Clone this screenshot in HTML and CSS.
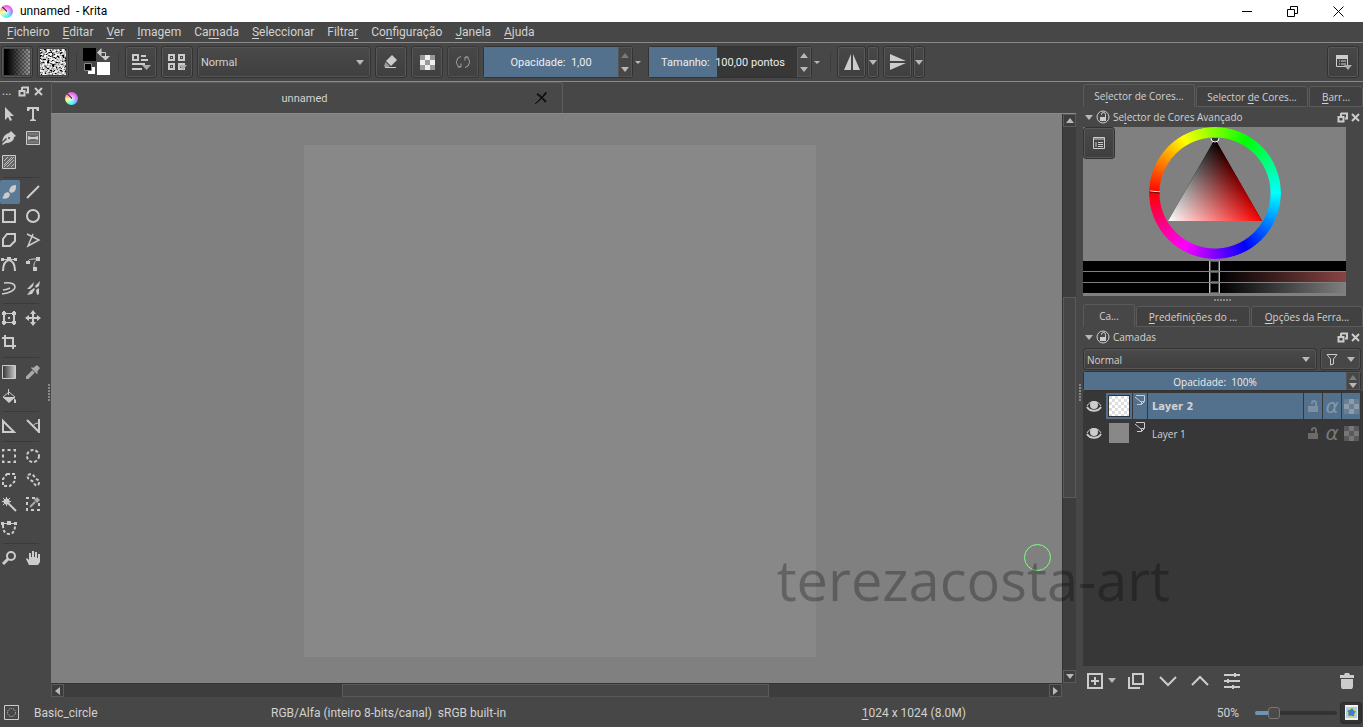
FILE: index.html
```html
<!DOCTYPE html>
<html lang="pt">
<head>
  <meta charset="UTF-8">
  <meta name="viewport" content="width=device-width, initial-scale=1.0">
  <title>unnamed - Krita</title>
  <link rel="stylesheet" href="styles.css">
</head>

<body>
  <header class="titlebar">
    <span class="logo"></span>
    <h1>unnamed&nbsp; - Krita</h1>
    <div class="window-buttons">
      <button type="button" aria-label="Minimizar"><svg width="11" height="11"><path d="M1 5.500h10"/></svg></button>
      <button type="button" aria-label="Restaurar"><svg width="11" height="11"><path d="M.5 3.500h7v7h-7zM3.500 3.500v-3h7v7h-3"/></svg></button>
      <button type="button" aria-label="Fechar"><svg width="11" height="11"><path d="M.5.500l10 10M10.500.500l-10 10"/></svg></button>
    </div>
  </header>

  <nav class="menubar">
    <a href="#"><u>F</u>icheiro</a>
    <a href="#"><u>E</u>ditar</a>
    <a href="#"><u>V</u>er</a>
    <a href="#"><u>I</u>magem</a>
    <a href="#">Ca<u>m</u>ada</a>
    <a href="#"><u>S</u>eleccionar</a>
    <a href="#">Filtra<u>r</u></a>
    <a href="#">Co<u>n</u>figuração</a>
    <a href="#"><u>J</u>anela</a>
    <a href="#"><u>A</u>juda</a>
  </nav>

  <div class="toolbar">
    <button type="button" class="tbtn" aria-label="Gradiente"><span class="gradient-chip"></span></button>
    <button type="button" class="tbtn" aria-label="Padrão">
      <svg width="26" height="26">
        <filter id="grain" x="0" y="0" width="1" height="1">
          <feTurbulence type="fractalNoise" baseFrequency="0.4 0.6" numOctaves="3" seed="4"/>
          <feColorMatrix values="3 0 0 0 -1  3 0 0 0 -1  3 0 0 0 -1  0 0 0 0 1"/>
        </filter>
        <rect width="26" height="26" filter="url(#grain)"/>
      </svg>
    </button>
    <span class="sep"></span>
    <button type="button" class="color-pair" aria-label="Cores">
      <svg width="28" height="28">
        <path d="M0 0h13v13H0z" fill="#000"/>
        <path d="M14 14h13v13H14z" fill="#fff"/>
        <path d="M5 19h7v7H5z" fill="#fff"/>
        <path d="M1.500 15.500h7v7h-7z" fill="#000" stroke="#8a8a8a"/>
        <path d="M17 4.500h5.500v5" class="ln"/>
        <path d="M14 4.500L18.500 0v9zM18 8h9l-4.500 4.500z" class="fl"/>
      </svg>
    </button>
    <span class="sep"></span>
    <button type="button" class="tbtn" aria-label="Editar pincel">
      <svg width="22" height="22">
        <path d="M3 4h5v5H3zM11 5h5M11 9h7M2 13h13M2 18h10" class="ln w2"/>
        <path d="M12 14h9l-4.500 5z" fill="#aaa"/>
      </svg>
    </button>
    <button type="button" class="tbtn" aria-label="Escolher pincel">
      <svg width="22" height="22">
        <path d="M3 4h5v5H3zM13 4h5v5h-5zM3 13h5v5H3zM13 13h5v5h-5z" class="ln w2"/>
        <path d="M5 6h1v1H5zM15 6h1v1h-1zM5 15h1v1H5z" fill="#ccc"/>
        <path d="M13 14h8l-4 5z" fill="#aaa"/>
      </svg>
    </button>
    <label class="select blend">
      <select aria-label="Modo de mistura"><option>Normal</option></select>
    </label>
    <button type="button" class="tbtn" aria-label="Borracha">
      <svg width="16" height="16">
        <path d="M9 1l5 5-6 6-5-5z" class="fl"/>
        <path d="M2.500 8l4 4-1 1.500H2.500L1 12z" fill="#9a9a9a"/>
        <path d="M2 13.500h11" class="ln"/>
      </svg>
    </button>
    <button type="button" class="tbtn" aria-label="Preservar alfa"><span class="checker"></span></button>
    <button type="button" class="tbtn dim" aria-label="Recarregar">
      <svg width="16" height="16"><path d="M6 2.500A5.500 5.500 0 0 0 5 13M10 13.500A5.500 5.500 0 0 0 11 3M2.500 13H6v-3.500M13.500 3H10v3.500" class="ln"/></svg>
    </button>
    <div class="spin opacity">
      <input type="text" value="Opacidade:&nbsp; 1,00" aria-label="Opacidade">
      <span class="arrows"><button type="button" class="up off" aria-label="Mais"></button><button type="button" class="down" aria-label="Menos"></button></span>
    </div>
    <span class="tiny"></span>
    <div class="spin size">
      <input type="text" value="Tamanho:&nbsp; 100,00 pontos" aria-label="Tamanho">
      <span class="arrows"><button type="button" class="up" aria-label="Mais"></button><button type="button" class="down" aria-label="Menos"></button></span>
    </div>
    <span class="tiny"></span>
    <span class="sep"></span>
    <div class="split">
      <button type="button" class="tbtn" aria-label="Espelho horizontal">
        <svg width="18" height="18"><path d="M8 1v16H1zM10 1v16h7z" class="fl"/></svg>
      </button><button type="button" class="tbtn drop" aria-label="Opções"></button>
    </div>
    <div class="split">
      <button type="button" class="tbtn" aria-label="Espelho vertical">
        <svg width="18" height="18"><path d="M1 8h16L1 1zM1 10h16L1 17z" class="fl"/></svg>
      </button><button type="button" class="tbtn drop" aria-label="Opções"></button>
    </div>
    <button type="button" class="tbtn push" aria-label="Área de trabalho">
      <svg width="20" height="18">
        <path d="M3.500 3.500h11v10h-11zM3 4h12M6 8h1M8 8h5M6 11h1M8 11h5" class="ln"/><path d="M3 2h12v4H3z" class="fl"/>
        <path d="M11 12h8l-4 5z" fill="#aaa"/>
      </svg>
    </button>
  </div>

  <main class="workspace">
    <aside class="toolbox">
      <div class="toolbox-head">
        <span>...</span>
        <button type="button" aria-label="Destacar"><svg width="11" height="11"><path d="M4 1.500h6v5H8M4 1v3" class="ln w2"/><path d="M1.500 5h5v4.500h-5z" class="ln w2"/></svg></button>
        <button type="button" aria-label="Fechar"><svg width="9" height="9"><path d="M1 1l7 7M8 1L1 8" class="ln w2"/></svg></button>
      </div>
      <div class="tools">
        <button type="button" aria-label="Seleccionar formas"><svg><path d="M4 1v13l3-3 2 4 2-1-2-4h4z" class="fl"/></svg></button>
        <button type="button" aria-label="Texto"><svg><path d="M2 1h12v4h-2l-1-2H9v10l2 1v1H5v-1l2-1V3H5L4 5H2z" class="fl"/></svg></button>
        <button type="button" aria-label="Caligrafia"><svg><path d="M10 1l5 5-2 1c0 4-4 6-8 6l-3 2-1-1 5-5-1-1-4 4c1-5 3-8 7-9z" class="fl"/><circle cx="8" cy="8" r="1" fill="#444"/></svg></button>
        <button type="button" aria-label="Padrões"><svg><path d="M1.500 1.500h13v13h-13z" fill="#666" class="box"/><path d="M3 4h10M3 12h10" stroke="#888"/><path d="M3 6l3 1h4l3-1v4l-3-1H6l-3 1z" class="fl"/></svg></button>
        <button type="button" aria-label="Preencher"><svg><path d="M1.500 1.500h13v13h-13z" fill="#666" class="box"/><path d="M3 7l4-4M3 11l8-8M3 13L13 3M6 13l7-7M10 13l3-3" stroke="#bbb"/></svg></button>
      </div>
      <div class="tools">
        <button type="button" class="active" aria-label="Pincel"><svg><path d="M15 1c-3 0-5 1-6 3l-1 3 2 2 3-1c2-2 2-4 2-7z" class="fl"/><path d="M7 8l2 2-1 3c-2 2-5 2-7 1 2-1 1-3 3-5z" class="fl"/></svg></button>
        <button type="button" aria-label="Linha"><svg><path d="M2 14L14 2" class="ln w2"/></svg></button>
        <button type="button" aria-label="Rectângulo"><svg><path d="M2 2h12v12H2z" class="ln w2"/></svg></button>
        <button type="button" aria-label="Elipse"><svg><circle cx="8" cy="8" r="6" class="ln w2"/></svg></button>
        <button type="button" aria-label="Polígono"><svg><path d="M6 2h8v7l-5 5H2V7z" class="ln w2"/></svg></button>
        <button type="button" aria-label="Linha poligonal"><svg><path d="M2 2l12 6-11 6 5-12" fill="none" stroke="#ccc" stroke-width="1.500"/></svg></button>
        <button type="button" aria-label="Bézier"><svg><path d="M2 15c0-6 2-10 6-11 4 1 6 5 6 11" class="ln w2"/><path d="M1 3.500h14" class="ln"/><path d="M6 1h4v4H6zM0 2h3v3H0zM13 2h3v3h-3z" class="fl"/></svg></button>
        <button type="button" aria-label="Curva livre"><svg><path d="M3 6c0-3 4-3 9-3v1C9 6 8 9 10 14" class="ln"/><path d="M1 5h4v3H1zM11 1h4v4h-4zM8 11h4v4H8z" class="fl"/></svg></button>
        <button type="button" aria-label="Pincel dinâmico"><svg><path d="M3 3c7-1 11 1 11 4s-5 6-13 7M2 10c3 0 5-1 7-2" fill="none" stroke="#ccc" stroke-width="1.500"/></svg></button>
        <button type="button" aria-label="Multi-pincel"><svg><path d="M15 1l-1 5-3 2-1-2zM9 2l-1 4-3 3-3 0 3-3zM9 8l1 1-3 5-5 1 3-4zM14 8l0 6-2 1-1-5z" class="fl"/></svg></button>
      </div>
      <div class="tools">
        <button type="button" aria-label="Transformar"><svg><path d="M3.500 3.500h9v9h-9z" class="ln"/><path d="M1 2h4v3H1zM11 2h4v3h-4zM1 11h4v3H1zM11 11h4v3h-4zM7 7h2v2H7zM2 1h2v14H2zM12 1h2v14h-2z" class="fl"/></svg></button>
        <button type="button" aria-label="Mover"><svg><path d="M8 2v12M2 8h12" class="ln w2"/><path d="M8 0l3 4H5zM8 16l3-4H5zM0 8l4-3v6zM16 8l-4-3v6z" class="fl"/></svg></button>
        <button type="button" aria-label="Recortar"><svg><path d="M4 1v11h11M1 4h11v11" class="ln w2"/></svg></button>
      </div>
      <div class="tools">
        <button type="button" aria-label="Gradiente"><svg><linearGradient id="tg"><stop stop-color="#333"/><stop offset="1" stop-color="#ccc"/></linearGradient><path d="M1.500 1.500h13v13h-13z" fill="url(#tg)" stroke="#ccc"/></svg></button>
        <button type="button" class="soft" aria-label="Selector de cor"><svg><path d="M12 1l3 3-3 4 1 1-1 1-6-6 1-1 1 1z" class="fl"/><path d="M8 7l-6 6v1h1l6-6" class="ln w2"/></svg></button>
        <button type="button" aria-label="Balde"><svg><path d="M8 4l6 5-6 5-6-5z" class="ln"/><path d="M2 9h12l-6 6zM13 10l2 2v3h-2zM7 1h1v6H7z" class="fl"/></svg></button>
      </div>
      <div class="tools">
        <button type="button" aria-label="Assistentes"><svg><path d="M2 3v11h11z" class="ln w2"/></svg></button>
        <button type="button" aria-label="Medir"><svg><path d="M2 2l12 12M14 1v14" class="ln w2"/><path d="M8 8c1-2 3-3 6-3" class="ln"/></svg></button>
      </div>
      <div class="tools">
        <button type="button" aria-label="Selecção rectangular"><svg><path d="M2 2h12v12H2z" class="ln w2" stroke-dasharray="3 3" stroke-dashoffset="1.500"/></svg></button>
        <button type="button" aria-label="Selecção elíptica"><svg><circle cx="8" cy="8" r="6" class="ln w2" stroke-dasharray="3 2"/></svg></button>
        <button type="button" aria-label="Selecção poligonal"><svg><path d="M6 2h8v7l-5 5H2V7z" class="ln w2" stroke-dasharray="3 2"/></svg></button>
        <button type="button" aria-label="Selecção livre"><svg><path d="M3 3c3-2 6 0 7 3 2 2 5 2 4 5-1 4-4 3-5 0S1 8 3 3z" class="ln w2" stroke-dasharray="3 2"/></svg></button>
        <button type="button" aria-label="Varinha"><svg><path d="M6 6l9 9" class="ln w2"/><path d="M5.500 1v9M1 5.500h9M2 2l7 7M9 2L2 9" class="ln"/><circle cx="5.500" cy="5.500" r="3" class="fl"/></svg></button>
        <button type="button" aria-label="Selecção por cor"><svg><path d="M10 2H2v12h12V7" class="ln w2" stroke-dasharray="3 3"/><path d="M12 1l3 3-3 3-3-3z" fill="#aaa"/><path d="M5 11l5-5" stroke="#aaa" stroke-width="2"/></svg></button>
        <button type="button" aria-label="Selecção Bézier"><svg><path d="M2 5c0 6 2 9 6 9s6-3 6-9" class="ln w2" stroke-dasharray="3 2"/><path d="M1 3.500h14" class="ln"/><path d="M6 1h4v4H6zM0 2h3v3H0zM13 2h3v3h-3z" class="fl"/></svg></button>
      </div>
      <div class="tools">
        <button type="button" aria-label="Ampliar"><svg><circle cx="10" cy="6" r="4" class="ln w2"/><path d="M7 9l-5 5" class="ln w3"/></svg></button>
        <button type="button" aria-label="Deslocar"><svg><path d="M4 15L1 9l1-1 2 2V3h2v4h1V1h2v6h1V2h2v6h1V4h2v8l-2 3z" class="fl"/></svg></button>
      </div>
    </aside>

    <section class="document">
      <div class="doc-tabs">
        <div class="doc-tab">
          <span class="logo"></span>
          <span class="doc-name">unnamed</span>
          <button type="button" aria-label="Fechar"><svg width="12" height="12"><path d="M2 2c3 1 6 5 9 8" fill="none" stroke="#111" stroke-width="2"/><path d="M11 0L7 5 0 12l5-4 6-6z" fill="#111" stroke="#111"/></svg></button>
        </div>
      </div>
      <div class="view">
        <div class="canvas"><div class="paper"></div><span class="brush"></span></div>
        <div class="vscroll"><button type="button" class="up" aria-label="Subir"></button><div class="track"><div class="thumb"></div></div><button type="button" class="down" aria-label="Descer"></button></div>
        <div class="hscroll"><button type="button" class="left" aria-label="Esquerda"></button><div class="track"><div class="thumb"></div></div><button type="button" class="right" aria-label="Direita"></button></div>
      </div>
    </section>

    <aside class="dockers">
      <section class="color-dock">
        <div class="tabs">
          <button type="button" class="tab on w112">Se<u>l</u>ector de Cores...</button>
          <button type="button" class="tab w112">Selector <u>d</u>e Cores...</button>
          <button type="button" class="tab rest"><u>B</u>arr...</button>
        </div>
        <div class="dock-head">
          <span class="fold"></span>
          <svg width="14" height="14"><circle cx="7" cy="7" r="6" class="ln"/><path d="M4 7h6v4H4z" class="fl"/><path d="M5.500 5V4.500a2 2 0 0 1 4 0V7" class="ln"/></svg>
          <h2>Se<u>l</u>ector de Cores Avançado</h2>
          <button type="button" aria-label="Destacar"><svg width="11" height="11"><path d="M4 1.500h6v5H8M4 1v3" class="ln w2"/><path d="M1.500 5h5v4.500h-5z" class="ln w2"/></svg></button>
          <button type="button" aria-label="Fechar"><svg width="9" height="9"><path d="M1 1l7 7M8 1L1 8" class="ln w2"/></svg></button>
        </div>
        <div class="selector">
          <div class="wheel-area">
            <button type="button" class="tbtn config" aria-label="Configurar">
              <svg width="14" height="14"><path d="M1.500 1.500h11v11h-11zM1 3h12M4 6v5M6 6.500h5M6 8.500h5M6 10.500h5" class="ln"/></svg>
            </button>
            <div class="wheel">
              <div class="ring"></div>
              <svg class="triangle" width="132" height="132">
                <defs>
                  <linearGradient id="redRamp" gradientUnits="userSpaceOnUse" x1="0" y1="12" x2="0" y2="94"><stop stop-color="#000"/><stop offset="1" stop-color="#f00"/></linearGradient>
                  <linearGradient id="cyanRamp" gradientUnits="userSpaceOnUse" x1="19" y1="94" x2="89" y2="53"><stop stop-color="#0ff"/><stop offset="1" stop-color="#000"/></linearGradient>
                </defs>
                <path d="M66 12L113 94H19z" fill="url(#redRamp)"/>
                <path d="M66 12L113 94H19z" fill="url(#cyanRamp)" class="screen"/>
                <path d="M62 11a4 4 0 0 0 8 0" fill="#333" stroke="#fff"/>
                <path d="M1 64l10 1" stroke="#fff"/><path d="M1 65l10 1" stroke="#600"/>
              </svg>
            </div>
          </div>
          <div class="shade s1"><i></i></div>
          <div class="shade s2"><i></i></div>
          <div class="shade s3"><i></i></div>
        </div>
        <div class="grip"></div>
      </section>

      <section class="layer-dock">
        <div class="tabs">
          <button type="button" class="tab on w52">Ca...</button>
          <button type="button" class="tab w114"><u>P</u>redefinições do ...</button>
          <button type="button" class="tab rest"><u>O</u>pções da Ferra...</button>
        </div>
        <div class="dock-head">
          <span class="fold"></span>
          <svg width="14" height="14"><circle cx="7" cy="7" r="6" class="ln"/><path d="M4 7h6v4H4z" class="fl"/><path d="M5.500 5V4.500a2 2 0 0 1 4 0V7" class="ln"/></svg>
          <h2>Camadas</h2>
          <button type="button" aria-label="Destacar"><svg width="11" height="11"><path d="M4 1.500h6v5H8M4 1v3" class="ln w2"/><path d="M1.500 5h5v4.500h-5z" class="ln w2"/></svg></button>
          <button type="button" aria-label="Fechar"><svg width="9" height="9"><path d="M1 1l7 7M8 1L1 8" class="ln w2"/></svg></button>
        </div>
        <div class="layer-mode">
          <label class="select"><select aria-label="Modo da camada"><option>Normal</option></select></label>
          <button type="button" class="filter" aria-label="Filtrar camadas"><svg width="12" height="13"><path d="M1 1.500h10L7.500 6v5l-3 1V6z" class="ln"/></svg></button>
        </div>
        <div class="spin layer-opacity">
          <input type="text" value="Opacidade:&nbsp; 100%" aria-label="Opacidade da camada">
          <span class="arrows"><button type="button" class="up off" aria-label="Mais"></button><button type="button" class="down" aria-label="Menos"></button></span>
        </div>
        <ul class="layers">
          <li class="layer selected">
            <button type="button" class="eye" aria-label="Visível"><svg width="16" height="14"><path d="M1 7c3-6 11-6 14 0" class="ln"/><circle cx="8" cy="6" r="4" class="fl"/><path d="M1 8c3 5 11 5 14 0" class="ln w2"/></svg></button>
            <span class="cell pic"><span class="thumbnail empty"></span></span>
            <span class="cell kind"><svg width="12" height="14"><path d="M2 2.500h8.500v6l-3 3H3M10.500 8.500h-3v3M1 4l6 5" class="ln"/></svg></span>
            <span class="cell name">Layer 2</span>
            <button type="button" class="cell" aria-label="Bloquear"><svg width="12" height="14"><path d="M1 7h10v6H1z" class="fl"/><path d="M5 5V4a2 2 0 0 1 4 0v3" class="ln w2"/></svg></button>
            <button type="button" class="cell alpha" aria-label="Herdar alfa">α</button>
            <button type="button" class="cell" aria-label="Bloquear alfa"><span class="checker"></span></button>
          </li>
          <li class="layer">
            <button type="button" class="eye" aria-label="Visível"><svg width="16" height="14"><path d="M1 7c3-6 11-6 14 0" class="ln"/><circle cx="8" cy="6" r="4" class="fl"/><path d="M1 8c3 5 11 5 14 0" class="ln w2"/></svg></button>
            <span class="cell pic"><span class="thumbnail"></span></span>
            <span class="cell kind"><svg width="12" height="14"><path d="M2 2.500h8.500v6l-3 3H3M10.500 8.500h-3v3M1 4l6 5" class="ln"/></svg></span>
            <span class="cell name">Layer 1</span>
            <button type="button" class="cell" aria-label="Bloquear"><svg width="12" height="14"><path d="M1 7h10v6H1z" class="fl"/><path d="M5 5V4a2 2 0 0 1 4 0v3" class="ln w2"/></svg></button>
            <button type="button" class="cell alpha" aria-label="Herdar alfa">α</button>
            <button type="button" class="cell" aria-label="Bloquear alfa"><span class="checker"></span></button>
          </li>
        </ul>
        <div class="layer-actions">
          <button type="button" class="add" aria-label="Adicionar"><svg width="18" height="18"><path d="M2 2h14v14H2zM9 5v8M5 9h8" class="ln w2"/></svg></button>
          <button type="button" aria-label="Duplicar"><svg width="18" height="18"><path d="M6 2h10v10H6zM2 5v11h11" class="ln w2"/></svg></button>
          <button type="button" aria-label="Baixar"><svg width="18" height="18"><path d="M1 5l8 8 8-8" class="ln w2"/></svg></button>
          <button type="button" aria-label="Subir"><svg width="18" height="18"><path d="M1 13l8-8 8 8" class="ln w2"/></svg></button>
          <button type="button" aria-label="Propriedades"><svg width="18" height="18"><path d="M1 3h16M1 9h16M1 15h16M12 1v4M5 7v4M10 13v4" class="ln w2"/></svg></button>
          <button type="button" class="push" aria-label="Remover"><svg width="16" height="18"><path d="M1 3h4l1-2h4l1 2h4v3H1zM2 7h12v8l-1 2H3l-1-2z" class="fl"/></svg></button>
        </div>
      </section>
    </aside>
  </main>

  <footer class="statusbar">
    <svg width="15" height="15"><path d="M.5.500h14v14H.5z" class="ln"/><circle cx="7.500" cy="7.500" r="4" class="ln" stroke-dasharray="1 1"/></svg>
    <span class="preset">Basic_circle</span>
    <span class="profile">RGB/Alfa (inteiro 8-bits/canal)&nbsp; sRGB built-in</span>
    <span class="dims"><u>1</u>024 x 1024 (8.0M)</span>
    <label for="zoom">50%</label>
    <input type="range" id="zoom" min="0" max="100" value="18">
    <button type="button" class="fit" aria-label="Ajustar"><svg width="13" height="15"><path d="M0 0h13v15H0z" fill="#eef3ee"/><path d="M1 2h11v11H1z" fill="#a9d0ee"/><circle cx="6.500" cy="7.500" r="4" fill="#3d7fc6" stroke="#e8d84a" stroke-width="1.500" stroke-dasharray="3 2"/></svg></button>
  </footer>

  <div class="watermark">terezacosta-art</div>
</body>

</html>
```
FILE: styles.css
```css
* {
  box-sizing: border-box;
}

body {
  display: flex;
  flex-direction: column;
  height: 100vh;
  margin: 0;
  overflow: hidden;
  position: relative;
  background-color: #474747;
  color: #d2d2d2;
  font-family: Roboto, 'Open Sans', sans-serif;
  font-size: 12px;
  line-height: 16px;
}

h1,
h2 {
  margin: 0;
  font-size: inherit;
  font-weight: normal;
}

button,
input,
select {
  margin: 0;
  padding: 0;
  border: none;
  background: none;
  color: inherit;
  font: inherit;
}

button {
  display: flex;
  align-items: center;
  justify-content: center;
}

svg {
  display: block;
  flex: none;
}

u {
  text-underline-offset: 2px;
}

/* icon strokes and fills */
.ln {
  fill: none;
  stroke: #ccc;
}

.w2 {
  stroke-width: 2;
}

.w3 {
  stroke-width: 3;
}

.fl {
  fill: #ccc;
}

.box {
  stroke: #ccc;
}

.push {
  margin-left: auto;
}

/* title bar */
.titlebar {
  display: flex;
  align-items: center;
  height: 22px;
  gap: 7px;
  padding-right: 2px;
  background-color: #fff;
  color: #000;
}

.logo {
  width: 13px;
  height: 13px;
  border-radius: 50%;
  background: linear-gradient(45deg, transparent 46%, #555 46%, #555 58%, transparent 58%) 0 0 / 7px 7px no-repeat,
    radial-gradient(circle, rgba(255, 255, 255, 0.8), transparent 60%),
    conic-gradient(#f5e, #b7f 90deg, #4df 150deg, #5fe 200deg, #ff6 260deg, #f7c 310deg, #f5e);
}

.window-buttons {
  display: flex;
  margin-left: auto;
}

.window-buttons button {
  width: 46px;
  height: 20px;
}

.window-buttons path {
  fill: none;
  stroke: #000;
}

/* menu */
.menubar {
  display: flex;
  height: 21px;
  padding: 2px 7px 0;
  gap: 13px;
  border-bottom: 1px solid #8a8a8a;
}

.menubar a {
  color: inherit;
  text-decoration: none;
}

/* toolbar */
.toolbar {
  display: flex;
  align-items: center;
  height: 39px;
  gap: 4px;
  padding-left: 1px;
  border-bottom: 1px solid #8a8a8a;
  font-size: 11px;
}

.tbtn {
  width: 32px;
  height: 32px;
  border: 1px solid #333;
  border-radius: 3px;
  box-shadow: inset 0 0 0 1px #585858;
  background: linear-gradient(#484848, #3f3f3f);
}

.sep {
  width: 1px;
  height: 20px;
  margin: 0 2px 0 3px;
  background-color: #3c3c3c;
}

.gradient-chip {
  width: 26px;
  height: 26px;
  background: linear-gradient(90deg, #000 10%, transparent),
    conic-gradient(#999 25%, #666 0 50%, #999 0 75%, #666 0) 0 0 / 4px 4px;
}

.color-pair {
  width: 28px;
  height: 28px;
}

.checker {
  width: 15px;
  height: 15px;
  background: conic-gradient(#eee 25%, #999 0 50%, #eee 0 75%, #999 0) 0 0 / 10px 10px;
}

.dim {
  opacity: 0.7;
}

.select {
  display: flex;
  align-items: center;
  position: relative;
  border: 1px solid #333;
  border-radius: 3px;
  box-shadow: inset 0 0 0 1px #555;
  background: linear-gradient(#4a4a4a, #3f3f3f);
}

.select select {
  flex: 1;
  align-self: stretch;
  appearance: none;
  padding: 2px 0 0 3px;
}

.select::after,
.tiny,
.drop::after,
.fold,
.filter::after,
.add::after {
  content: '';
  border: 4px solid transparent;
  border-top: 5px solid #b8b8b8;
  border-bottom: 0;
}

.select::after {
  position: absolute;
  right: 6px;
  pointer-events: none;
}

.blend {
  width: 174px;
  height: 32px;
}

.tiny {
  margin: 0 3px 0 -2px;
  border-width: 3px 3px 0;
}

.spin {
  display: flex;
  height: 32px;
  border: 1px solid #333;
  border-radius: 3px;
}

.spin input {
  flex: 1;
  min-width: 0;
  padding-top: 2px;
  text-align: center;
  background-color: #53718d;
  color: #eee;
}

.opacity {
  width: 150px;
}

.size {
  width: 164px;
}

.size input {
  background: linear-gradient(90deg, #53718d 46%, #373737 0);
}

.arrows {
  display: flex;
  flex-direction: column;
  width: 14px;
  border: 1px solid #555;
}

.arrows button {
  flex: 1;
}

.up::after,
.down::after {
  content: '';
  border: 4px solid transparent;
}

.up::after {
  border-bottom: 5px solid #b8b8b8;
  border-top: 0;
}

.down::after {
  border-top: 5px solid #b8b8b8;
  border-bottom: 0;
}

.off::after {
  border-bottom-color: #7a7a7a;
}

.split {
  display: flex;
  gap: 1px;
}

.split .tbtn {
  width: 29px;
}

.split .drop {
  width: 12px;
}

.toolbar .push {
  margin-right: 4px;
}

/* workspace */
.workspace {
  flex: 1;
  display: flex;
  min-height: 0;
}

.toolbox {
  width: 51px;
  padding-top: 1px;
  background: repeating-linear-gradient(#888 0 2px, transparent 2px 3px) 48px 302px / 2px 17px no-repeat;
}

.toolbox-head {
  display: flex;
  align-items: center;
  height: 16px;
  gap: 5px;
  margin-bottom: 3px;
  padding-left: 2px;
}

.toolbox-head span {
  width: 11px;
}

.tools {
  display: flex;
  flex-wrap: wrap;
  gap: 0 4px;
  padding-bottom: 6px;
  background: linear-gradient(#3a3a3a, #3a3a3a) 3px calc(100% - 2px) / 36px 1px no-repeat;
}

.tools:last-child {
  background: none;
}

.tools button {
  width: 20px;
  height: 24px;
  justify-content: flex-start;
  padding-left: 1px;
}

.tools svg {
  width: 16px;
  height: 16px;
}

.tools .active {
  background-color: #5b7a96;
  border-radius: 2px;
}

.soft {
  opacity: 0.75;
}

.document {
  flex: 1;
  display: flex;
  flex-direction: column;
  min-width: 0;
}

.doc-tabs {
  height: 32px;
  border-bottom: 1px solid #8a8a8a;
}

.doc-tab {
  display: flex;
  align-items: center;
  width: 512px;
  height: 31px;
  padding: 0 15px 0 13px;
  border: 1px solid #5c5c5c;
  border-bottom: 0;
  border-radius: 3px 3px 0 0;
  background-color: #484848;
  font-size: 11px;
}

.doc-name {
  flex: 1;
  padding: 2px 4px 0 0;
  text-align: center;
}

.view {
  flex: 1;
  display: grid;
  grid-template: 1fr 14px / 1fr 14px;
  min-height: 0;
}

.canvas {
  display: flex;
  align-items: center;
  justify-content: center;
  position: relative;
  padding: 5px 0 0 7px;
  background-color: #808080;
}

.paper {
  width: 512px;
  height: 512px;
  background-color: #888;
}

/* brush outline floats over the canvas */
.brush {
  position: absolute;
  right: 11px;
  bottom: 112px;
  width: 27px;
  height: 27px;
  border: 1px solid #7dff7d;
  border-radius: 50%;
}

.vscroll,
.hscroll {
  display: flex;
  background-color: #3d3d3d;
}

.vscroll {
  flex-direction: column;
  border-left: 1px solid #333;
}

.hscroll {
  border-top: 1px solid #333;
}

.vscroll button,
.hscroll button {
  width: 13px;
  height: 13px;
  border: 1px solid #5a5a5a;
}

.track {
  flex: 1;
}

.vscroll .track {
  padding-top: 170px;
}

.hscroll .track {
  padding-left: 278px;
}

.thumb {
  border: 1px solid #5a5a5a;
  background-color: #464646;
}

.vscroll .thumb {
  height: 201px;
}

.hscroll .thumb {
  width: 427px;
  height: 13px;
}

.left::after,
.right::after {
  content: '';
  border: 4px solid transparent;
}

.left::after {
  border-right: 5px solid #b8b8b8;
  border-left: 0;
}

.right::after {
  border-left: 5px solid #b8b8b8;
  border-right: 0;
}

/* dockers */
.dockers {
  display: flex;
  flex-direction: column;
  width: 287px;
  padding: 2px 0 0 7px;
  background: repeating-linear-gradient(#888 0 2px, transparent 2px 3px) 3px 302px / 2px 17px no-repeat;
  font-family: 'Open Sans', sans-serif;
  font-size: 10px;
  line-height: 14px;
}

.tabs {
  display: flex;
  align-items: flex-end;
  height: 23px;
  gap: 1px;
}

.tab {
  display: block;
  height: 21px;
  border: 1px solid #5a5a5a;
  border-radius: 3px 3px 0 0;
  background-color: #414141;
  white-space: nowrap;
}

.tab.on {
  height: 23px;
  border-bottom: 0;
  background-color: #474747;
}

.w112 {
  width: 112px;
}

.w114 {
  width: 114px;
}

.w52 {
  width: 52px;
}

.rest {
  flex: 1;
}

.dock-head {
  display: flex;
  align-items: center;
  height: 20px;
  gap: 3px;
  padding: 0 3px 0 2px;
}

.dock-head h2 {
  flex: 1;
}

.selector {
  margin-right: 17px;
  padding-bottom: 2px;
  background-color: #808080;
}

.wheel-area {
  display: flex;
  justify-content: center;
  position: relative;
  height: 134px;
}

.config {
  position: absolute;
  left: 0;
  top: 0;
}

.wheel {
  display: grid;
  width: 132px;
  height: 132px;
}

.ring {
  grid-area: 1 / 1;
  border-radius: 50%;
  background: conic-gradient(from 270deg, red, yellow, lime, cyan, blue, magenta, red);
  mask: radial-gradient(circle, transparent 55px, #000 56px);
}

.triangle {
  grid-area: 1 / 1;
  isolation: isolate;
}

.screen {
  mix-blend-mode: screen;
}

.shade {
  display: flex;
  justify-content: center;
  height: 11px;
  border-bottom: 1px solid #808080;
  background-color: #000;
}

.shade i {
  width: 11px;
  border: 1px solid #bbb;
  border-width: 0 1px;
  box-shadow: inset 0 0 0 1px #555;
}

.s2 {
  background: linear-gradient(90deg, #000 52%, #844);
}

.s3 {
  background: linear-gradient(90deg, #000 52%, #808080);
}

.grip {
  width: 18px;
  height: 2px;
  margin: 3px auto;
  background: repeating-linear-gradient(90deg, #888 0 2px, transparent 2px 3px);
}

.layer-dock {
  flex: 1;
  display: flex;
  flex-direction: column;
}

.layer-mode {
  display: flex;
  height: 24px;
  gap: 3px;
  padding: 1px 2px 1px 0;
}

.layer-mode .select {
  flex: 1;
}

.filter {
  width: 41px;
  gap: 9px;
  border: 1px solid #333;
  border-radius: 3px;
  box-shadow: inset 0 0 0 1px #555;
}

.layer-opacity {
  height: 20px;
  margin-right: 2px;
}

.layers {
  flex: 1;
  margin: 0;
  padding: 2px 0 0;
  list-style: none;
  background-color: #373737;
}

.layer {
  display: flex;
  height: 27px;
  gap: 1px;
  padding: 0 3px 1px 0;
}

.eye {
  width: 22px;
}

.cell {
  display: flex;
  align-items: center;
  justify-content: center;
  width: 18px;
}

.layer .pic {
  width: 26px;
}

.layer .kind {
  width: 14px;
  align-items: flex-start;
}

.layer .name {
  flex: 1;
  justify-content: flex-start;
  padding: 2px 0 0 4px;
}

.selected .cell {
  background-color: #53718d;
}

.selected .name {
  font-family: 'DejaVu Sans', sans-serif;
  font-weight: bold;
}

.layer button.cell > * {
  opacity: 0.35;
}

.alpha {
  color: #777;
  font: italic 20px 'DejaVu Sans', sans-serif;
}

.selected .alpha {
  color: #8197ab;
}

.thumbnail {
  width: 20px;
  height: 20px;
  background-color: #888;
}

.empty {
  width: 22px;
  height: 22px;
  border: 1px solid #333;
  background: conic-gradient(#fff 25%, #ddd 0 50%, #fff 0 75%, #ddd 0) 0 0 / 6px 6px;
}

.layer-actions {
  display: flex;
  align-items: center;
  height: 31px;
  gap: 14px;
  padding: 0 8px 2px 3px;
}

.add {
  gap: 4px;
  margin-right: -3px;
}

/* status bar */
.statusbar {
  display: flex;
  align-items: center;
  height: 30px;
  padding: 1px 1px 0 4px;
}

.preset {
  width: 237px;
  padding-left: 15px;
}

.profile {
  flex: 1;
  padding-left: 15px;
}

.dims {
  width: 355px;
}

#zoom {
  width: 82px;
  height: 14px;
  margin: 0 3px 0 16px;
  appearance: none;
}

#zoom::-webkit-slider-runnable-track {
  height: 4px;
  border-radius: 2px;
  background: linear-gradient(90deg, #6d93b5 18%, #333 0);
}

#zoom::-webkit-slider-thumb {
  appearance: none;
  width: 12px;
  height: 12px;
  margin-top: -4px;
  border: 1px solid #777;
  border-radius: 3px;
  background-color: #4a4a4a;
}

.fit {
  width: 22px;
  height: 22px;
  border: 1px solid #2c2c2c;
  border-radius: 3px;
  background-color: #333;
}

/* signature laid over the whole window */
.watermark {
  position: absolute;
  right: 193px;
  bottom: 118px;
  color: rgba(0, 0, 0, 0.28);
  font-family: 'Open Sans', sans-serif;
  font-size: 56px;
  line-height: 60px;
  pointer-events: none;
}
```
